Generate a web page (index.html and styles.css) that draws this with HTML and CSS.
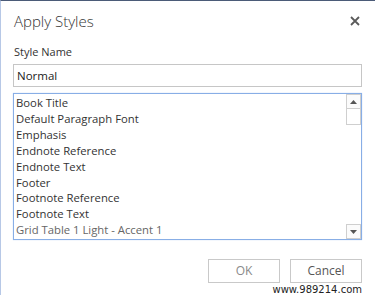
FILE: index.html
```html
<!DOCTYPE html>
<html>
<head>
<meta charset="utf-8">
<link rel="stylesheet" href="styles.css">
</head>
<body>
<div class="dialog">
  <div class="header">
    <div class="title">Apply Styles</div>
    <div class="close"><svg width="10" height="10" viewBox="0 0 10 10"><path d="M1 1L9 9M9 1L1 9" stroke="#5a5a5a" stroke-width="1.8"/></svg></div>
  </div>
  <div class="label">Style Name</div>
  <div class="input">Normal</div>
  <div class="listbox">
    <ul class="items">
      <li>Book Title</li>
      <li>Default Paragraph Font</li>
      <li>Emphasis</li>
      <li>Endnote Reference</li>
      <li>Endnote Text</li>
      <li>Footer</li>
      <li>Footnote Reference</li>
      <li>Footnote Text</li>
      <li>Grid Table 1 Light - Accent 1</li>
    </ul>
    <div class="scrollbar">
      <div class="sbtn"><svg width="7" height="4" viewBox="0 0 7 4"><path d="M0 4L3.5 0L7 4Z" fill="#555"/></svg></div>
      <div class="thumb"></div>
      <div class="track"></div>
      <div class="sbtn"><svg width="7" height="4" viewBox="0 0 7 4"><path d="M0 0L3.5 4L7 0Z" fill="#555"/></svg></div>
    </div>
  </div>
  <div class="buttons">
    <div class="btn disabled">OK</div>
    <div class="btn">Cancel</div>
  </div>
  <div class="watermark">www.989214.com</div>
</div>
</body>
</html>
```
FILE: styles.css
```css
html, body {
  margin: 0;
  padding: 0;
  background: #fff;
}
.dialog {
  width: 375px;
  height: 295px;
  box-sizing: border-box;
  border-top: 1px solid #4b5b78;
  border-left: 1px solid #b7c8e6;
  padding: 0 13px 0 12px;
  font-family: "Open Sans", "Noto Sans", sans-serif;
  color: #333;
  display: flex;
  flex-direction: column;
  overflow: hidden;
}
.header {
  display: flex;
  justify-content: space-between;
  align-items: center;
  height: 36px;
  padding-top: 3px;
  box-sizing: border-box;
}
.title {
  font-size: 15px;
  font-weight: 300;
  color: #333;
  padding-left: 1px;
}
.close {
  display: flex;
  padding-right: 2px;
}
.label {
  font-size: 11px;
  margin-top: 7px;
  padding-left: 1px;
  line-height: 16px;
}
.input {
  margin-top: 4px;
  height: 23px;
  box-sizing: border-box;
  border: 1px solid #c6c6c6;
  font-size: 11.5px;
  line-height: 21px;
  padding-left: 3px;
  color: #222;
}
.listbox {
  margin-top: 6px;
  width: 349px;
  height: 147px;
  box-sizing: border-box;
  border: 1px solid #88aee6;
  box-shadow: 0 0 1px #b8cff0;
  display: flex;
}
.items {
  list-style: none;
  margin: 0;
  padding: 1px 0 0 2px;
  flex: 1;
  font-size: 11.3px;
  line-height: 15.9px;
  color: #333;
}
.items li:last-child {
  color: #666;
}
.scrollbar {
  width: 15px;
  display: flex;
  flex-direction: column;
}
.sbtn {
  height: 15px;
  box-sizing: border-box;
  border: 1px solid #cfcfcf;
  background: #fbfbfb;
  display: flex;
  align-items: center;
  justify-content: center;
}
.thumb {
  height: 16px;
  box-sizing: border-box;
  border: 1px solid #cfcfcf;
  border-top: none;
  background: #fff;
}
.track {
  flex: 1;
}
.buttons {
  display: flex;
  justify-content: flex-end;
  gap: 10px;
  margin-top: 19px;
  width: 349px;
}
.btn {
  width: 72px;
  height: 24px;
  box-sizing: border-box;
  border: 1px solid #c9c9c9;
  font-size: 12px;
  line-height: 22px;
  text-align: center;
  color: #555;
}
.btn.disabled {
  color: #8a8a8a;
}
.watermark {
  width: 349px;
  text-align: right;
  font-family: "DejaVu Sans", sans-serif;
  font-size: 10px;
  color: #222;
  line-height: 11px;
  margin-top: 1px;
}
```
